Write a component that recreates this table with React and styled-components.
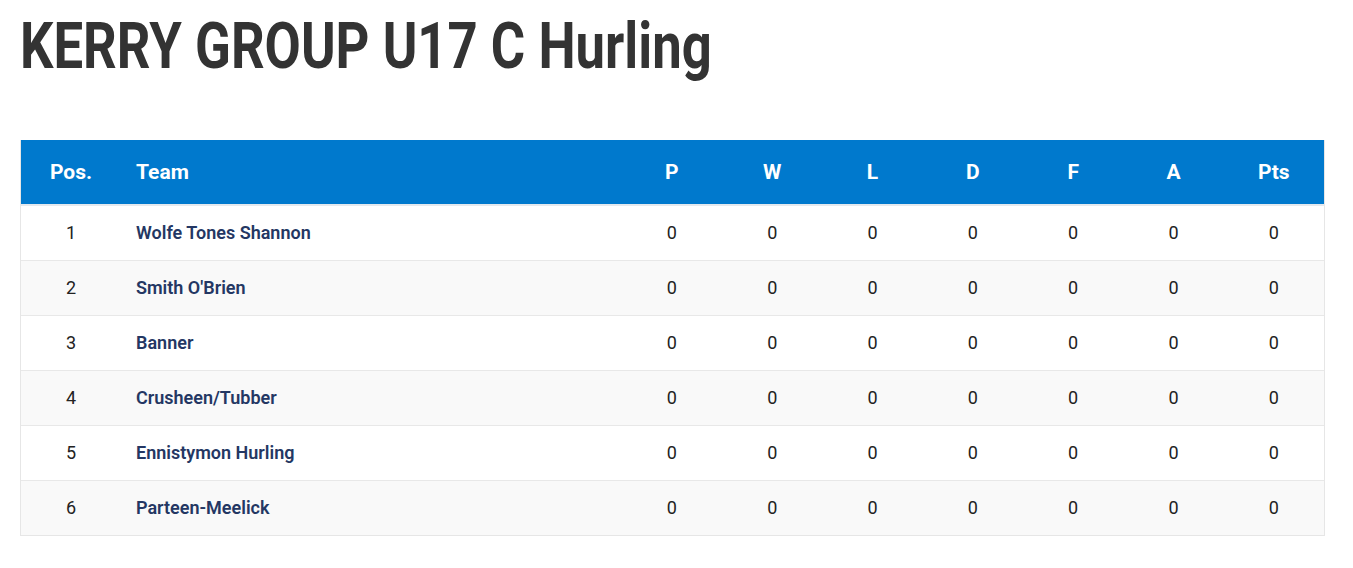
import styled, { createGlobalStyle } from 'styled-components';

const GlobalStyle = createGlobalStyle`
  body {
    margin: 0;
    background: #fff;
    font-family: Roboto, "Liberation Sans", sans-serif;
  }
`;

const teams = [
  'Wolfe Tones Shannon',
  "Smith O'Brien",
  'Banner',
  'Crusheen/Tubber',
  'Ennistymon Hurling',
  'Parteen-Meelick',
];

const stats = ['P', 'W', 'L', 'D', 'F', 'A', 'Pts'];

const Page = styled.div`
  padding: 11px 28px 0 20px;
`;

const Title = styled.h1`
  margin: 0 0 57px;
  font-size: 65px;
  line-height: 1.1;
  font-weight: 700;
  color: #333;
  display: inline-block;
  transform: scaleX(0.81);
  transform-origin: left center;
  white-space: nowrap;
`;

const Table = styled.div`
  border: 1px solid #e6e6e6;
  border-top: none;
`;

const Row = styled.div`
  display: grid;
  grid-template-columns: 100px 1fr repeat(7, 100.33px);
  align-items: center;
  height: ${p => (p.$head ? '64px' : '54px')};
  background: ${p => (p.$head ? '#0079cd' : p.$alt ? '#f9f9f9' : '#fff')};
  border-bottom: ${p => (p.$head ? '2px solid #e4e9ee' : '1px solid #e8e8e8')};
  &:last-child {
    border-bottom: none;
  }
`;

const Cell = styled.div`
  text-align: ${p => (p.$left ? 'left' : 'center')};
  padding-left: ${p => (p.$left ? '15px' : '0')};
  font-size: 18px;
  color: #222;
`;

const HeadCell = styled(Cell)`
  font-size: 21px;
  font-weight: 700;
  color: #fff;
`;

const TeamName = styled(Cell)`
  font-weight: 600;
  color: #243763;
`;

export default function App() {
  return (
    <Page>
      <GlobalStyle />
      <Title>KERRY GROUP U17 C Hurling</Title>
      <Table>
        <Row $head>
          <HeadCell>Pos.</HeadCell>
          <HeadCell $left>Team</HeadCell>
          {stats.map(s => (
            <HeadCell key={s}>{s}</HeadCell>
          ))}
        </Row>
        {teams.map((t, i) => (
          <Row key={t} $alt={i % 2 === 1}>
            <Cell>{i + 1}</Cell>
            <TeamName $left>{t}</TeamName>
            {stats.map(s => (
              <Cell key={s}>0</Cell>
            ))}
          </Row>
        ))}
      </Table>
    </Page>
  );
}
